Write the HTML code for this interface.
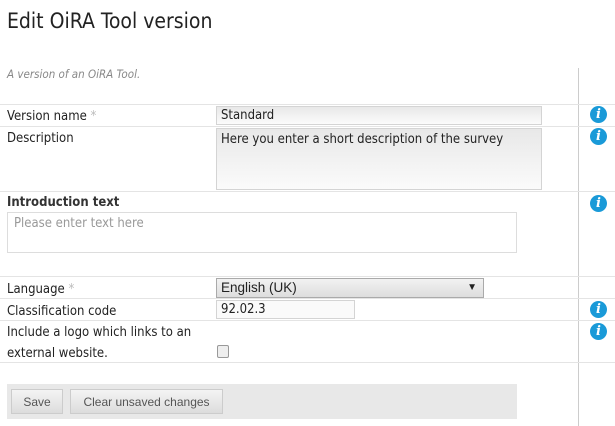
<!DOCTYPE html>
<html><head><style>
body{margin:0;width:615px;height:426px;background:#fff;font-family:"DejaVu Sans Condensed","DejaVu Sans",sans-serif;font-size:13px;color:#222;position:relative;overflow:hidden}
.a{position:absolute}
.h{left:0;width:615px;height:1px;background:#e4e4e4}
.inp{background:linear-gradient(#e8e8e8,#fbfbfb);border:1px solid #d4d4d4;box-sizing:border-box;padding:1px 4px}
.i{width:17px;height:17px;border-radius:50%;background:#1a9ad8;color:#fff;font:italic bold 13px "DejaVu Serif",serif;text-align:center;line-height:17px;left:590px}
.btn{background:linear-gradient(#f4f4f4,#dcdcdc);border:1px solid #ccc;box-sizing:border-box;color:#555;font-family:"Liberation Sans",sans-serif;font-size:12px;text-align:center;line-height:24px;top:389px;height:25px}
</style></head><body>
<div class="a" style="left:7px;top:9px;font-size:21px;color:#222">Edit OiRA Tool version</div>
<div class="a" style="left:7px;top:67px;font-size:11.5px;font-style:italic;color:#888">A version of an OiRA Tool.</div>
<div class="a" style="left:578px;top:68px;width:1px;height:358px;background:#ccc"></div>
<div class="a h" style="top:104px"></div>
<div class="a h" style="top:126px"></div>
<div class="a h" style="top:191px"></div>
<div class="a h" style="top:276px"></div>
<div class="a h" style="top:298px"></div>
<div class="a h" style="top:320px"></div>
<div class="a h" style="top:362px"></div>
<div class="a" style="left:7px;top:109px">Version name <span style="color:#bbb">*</span></div>
<div class="a inp" style="left:216px;top:106px;width:326px;height:19px">Standard</div>
<div class="a i" style="top:106px">i</div>
<div class="a" style="left:7px;top:131px">Description</div>
<div class="a inp" style="left:216px;top:128px;width:326px;height:62px;padding:3px 4px">Here you enter a short description of the survey</div>
<div class="a i" style="top:128px">i</div>
<div class="a" style="left:7px;top:195px;font-weight:bold;color:#333">Introduction text</div>
<div class="a" style="left:7px;top:212px;width:510px;height:41px;border:1px solid #ddd;box-sizing:border-box;padding:3px 6px;color:#999">Please enter text here</div>
<div class="a i" style="top:195px">i</div>
<div class="a" style="left:7px;top:282px">Language <span style="color:#bbb">*</span></div>
<div class="a inp" style="left:216px;top:278px;width:268px;height:20px;border-color:#aaa;background:linear-gradient(#f2f2f2,#ddd);font-family:'Liberation Sans',sans-serif;font-size:13.5px;line-height:16px">English (UK)<span style="position:absolute;right:6px;top:1px;font-size:10px">▼</span></div>
<div class="a" style="left:7px;top:304px">Classification code</div>
<div class="a inp" style="left:216px;top:300px;width:139px;height:19px;background:#fafafa">92.02.3</div>
<div class="a i" style="top:301px">i</div>
<div class="a" style="left:7px;top:322px;line-height:21px">Include a logo which links to an<br>external website.</div>
<div class="a" style="left:217px;top:345px;width:10px;height:11px;border:1px solid #999;border-radius:2px;background:#eee"></div>
<div class="a i" style="top:323px">i</div>
<div class="a" style="left:7px;top:384px;width:510px;height:35px;background:#e8e8e8"></div>
<div class="a btn" style="left:11px;width:52px">Save</div>
<div class="a btn" style="left:70px;width:153px">Clear unsaved changes</div>
</body></html>
